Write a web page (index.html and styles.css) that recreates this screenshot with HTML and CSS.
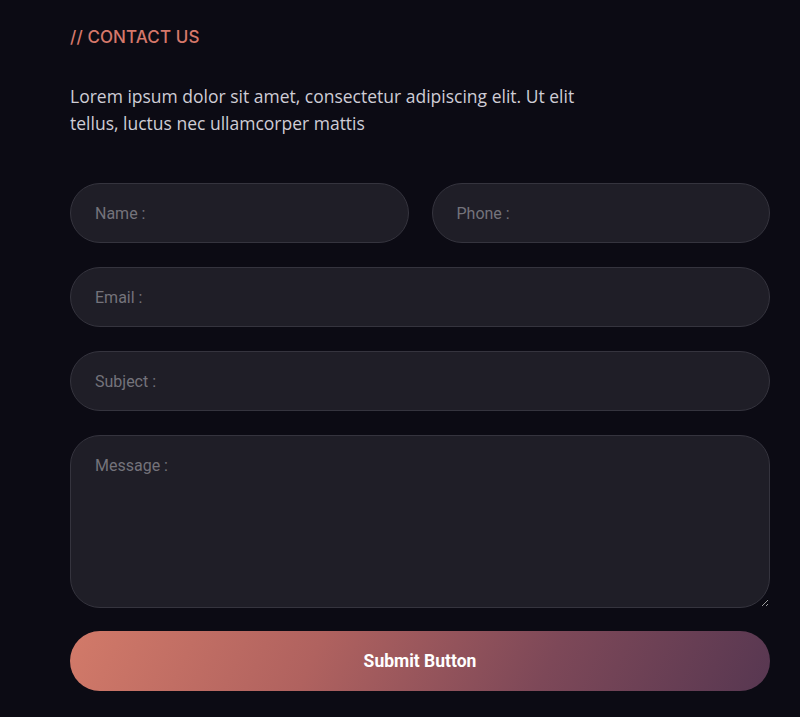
FILE: index.html
```html
<!DOCTYPE html>
<html lang="en">
<head>
<meta charset="utf-8">
<title>Contact Us</title>
<link rel="stylesheet" href="styles.css">
</head>
<body>
<section class="contact">
  <h2 class="eyebrow">// CONTACT US</h2>
  <p class="intro">Lorem ipsum dolor sit amet, consectetur adipiscing elit. Ut elit tellus, luctus nec ullamcorper mattis</p>
  <form class="form">
    <div class="row">
      <input class="field" type="text" placeholder="Name :">
      <input class="field" type="text" placeholder="Phone :">
    </div>
    <input class="field" type="email" placeholder="Email :">
    <input class="field" type="text" placeholder="Subject :">
    <textarea class="field message" placeholder="Message :"></textarea>
    <button class="submit" type="button">Submit Button</button>
  </form>
</section>
</body>
</html>
```

FILE: styles.css
```css
* { box-sizing: border-box; }
html, body {
  margin: 0;
  padding: 0;
  background: #0c0b14;
}
.contact {
  padding: 27px 30px 0 70px;
  width: 800px;
}
.eyebrow {
  margin: 0;
  font-family: "Inter", "Open Sans", sans-serif;
  font-weight: 500;
  font-size: 17px;
  line-height: 20px;
  color: #d6786a;
  letter-spacing: 0.1px;
}
.intro {
  margin: 36px 0 0;
  max-width: 540px;
  font-family: "Open Sans", sans-serif;
  font-size: 17.5px;
  line-height: 27px;
  color: #cfcdd6;
}
.form {
  margin-top: 46px;
  display: flex;
  flex-direction: column;
  gap: 24px;
}
.row {
  display: grid;
  grid-template-columns: 1fr 1fr;
  gap: 23px;
}
.field {
  display: block;
  width: 100%;
  height: 60px;
  padding: 0 24px;
  border: 1px solid #35343e;
  border-radius: 30px;
  background: #1f1e27;
  color: #cfcdd6;
  font-family: "Roboto", sans-serif;
  font-size: 16px;
  outline: none;
}
.field::placeholder { color: #74737b; }
.message {
  height: 173px;
  padding: 20px 24px;
  border-radius: 30px;
  resize: vertical;
}
.submit {
  display: block;
  width: 100%;
  height: 60px;
  margin-top: -1px;
  border: none;
  border-radius: 30px;
  background: linear-gradient(115deg, #d27a69 0%, #b0625f 35%, #7d4858 68%, #573751 100%);
  color: #ffffff;
  font-family: "Roboto", sans-serif;
  font-weight: 700;
  font-size: 17.5px;
  cursor: pointer;
}
```
